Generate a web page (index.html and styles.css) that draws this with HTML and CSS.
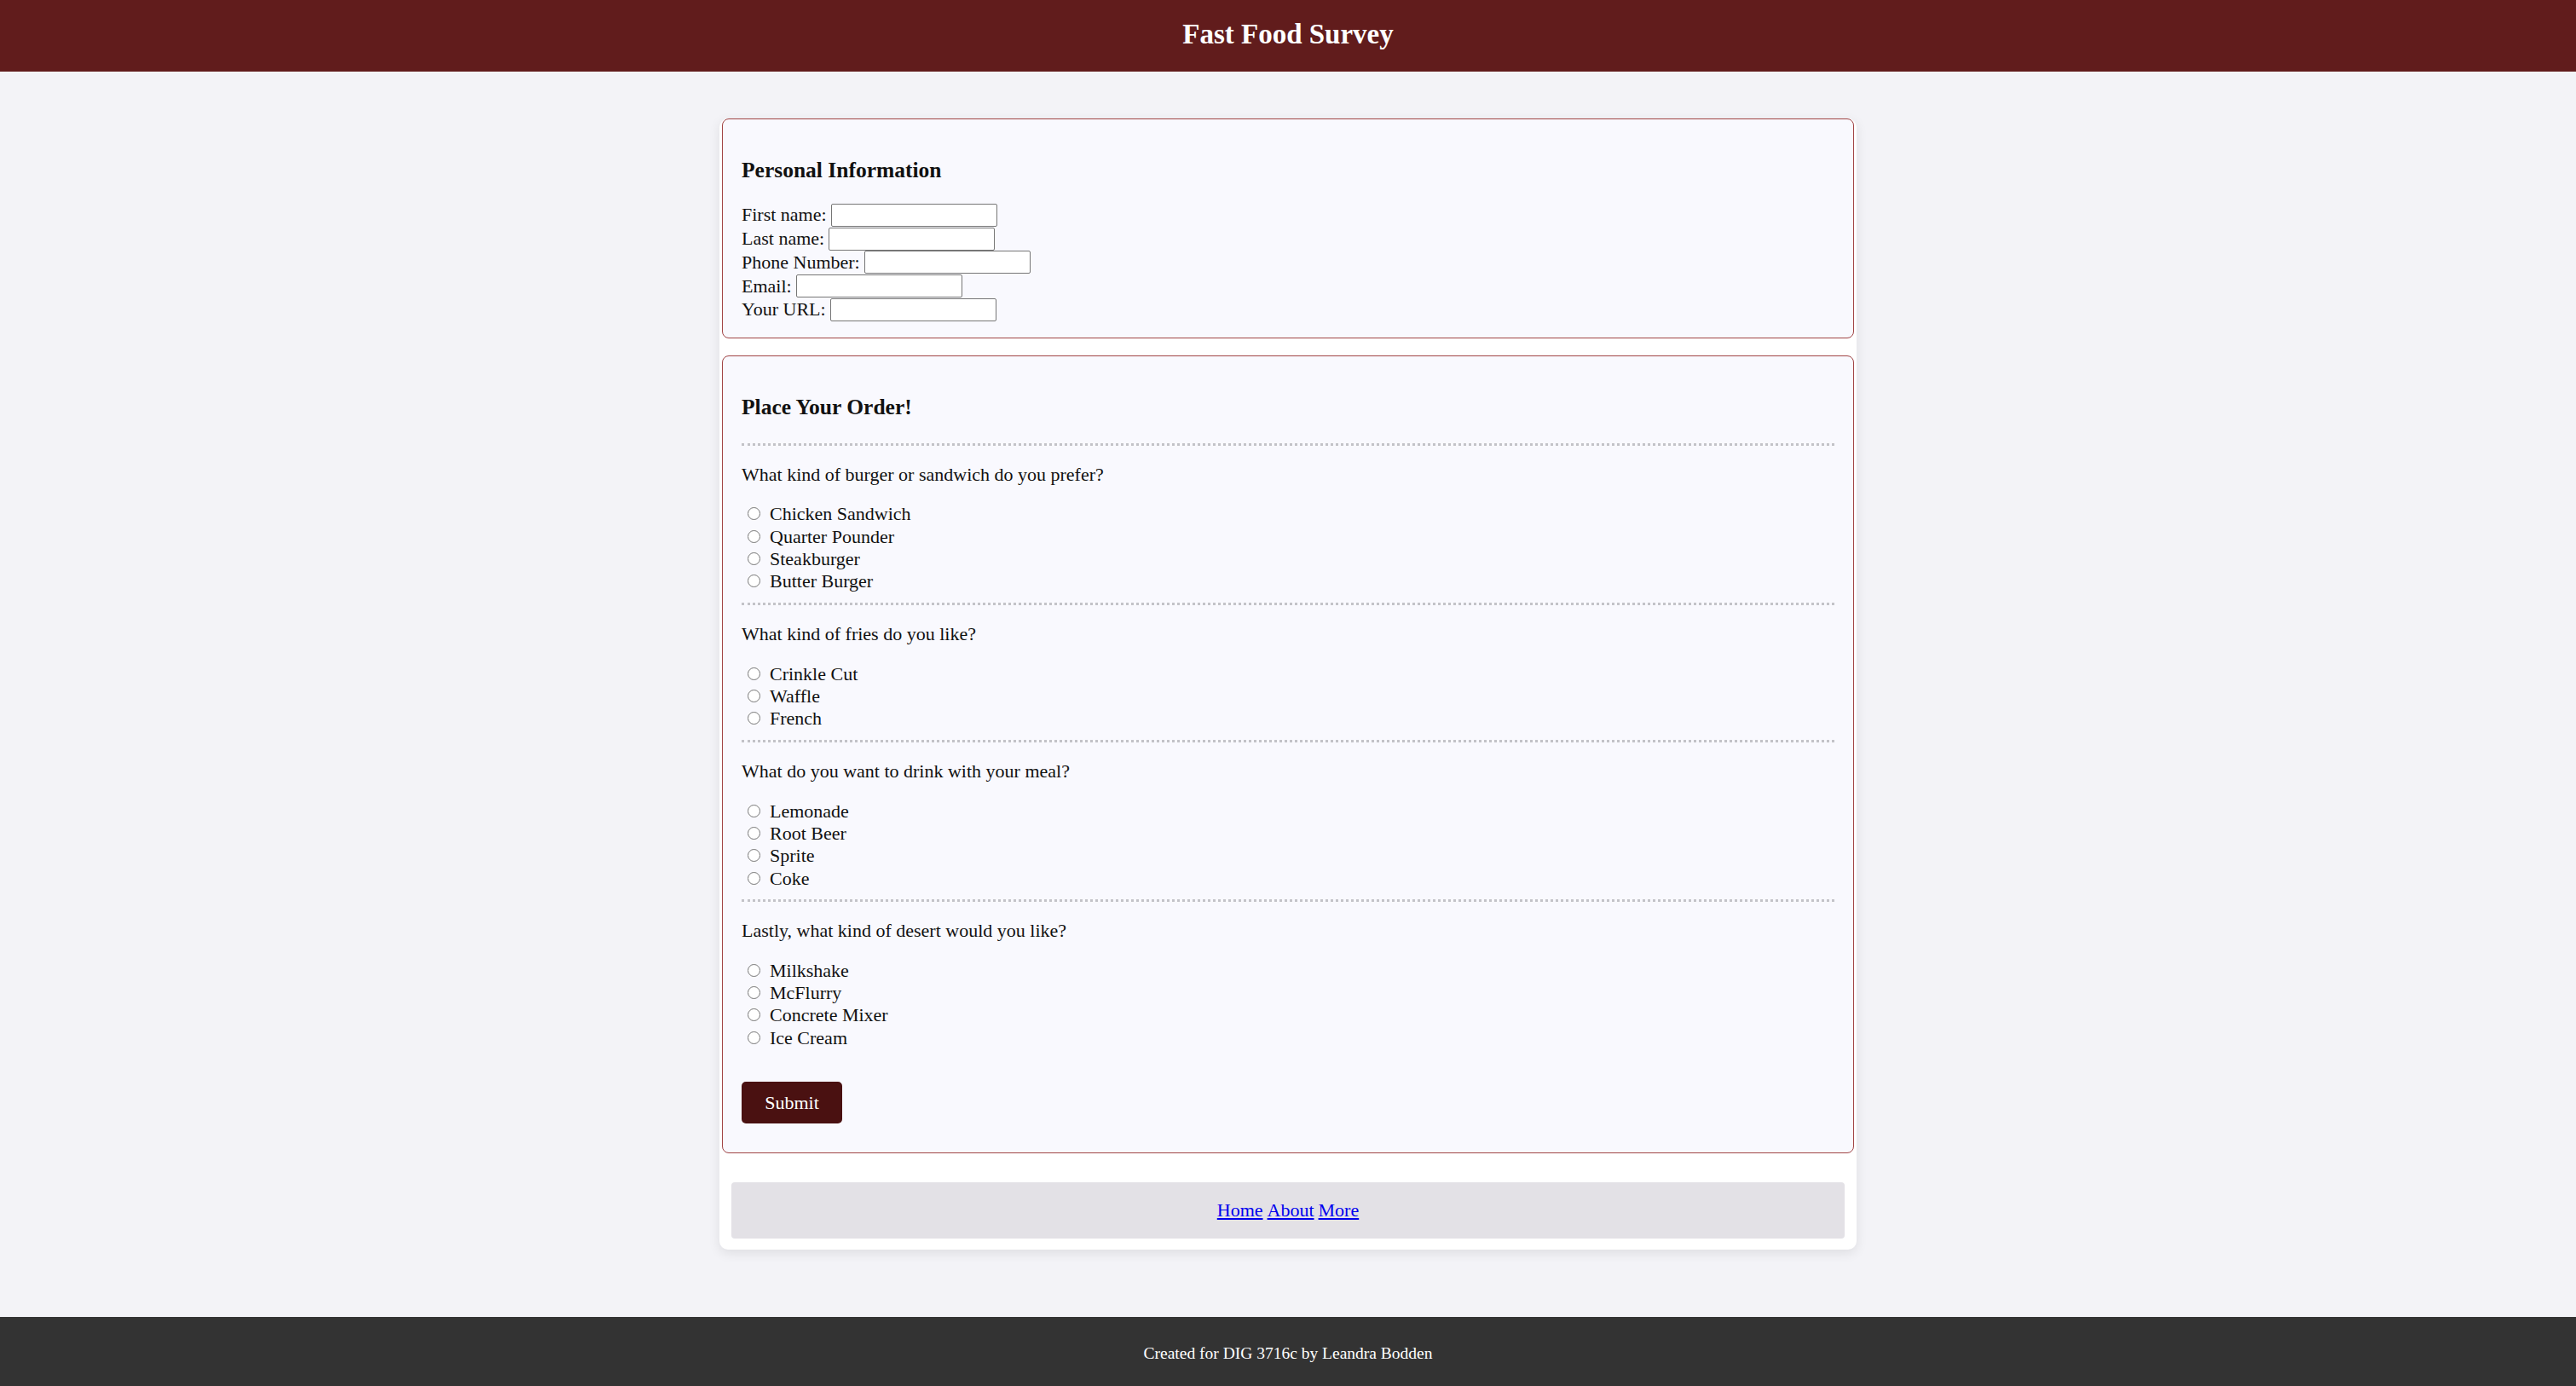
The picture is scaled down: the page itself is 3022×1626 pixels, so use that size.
FILE: index.html
```html
<!DOCTYPE html>
<html lang="en">
<head>
<meta charset="utf-8">
<title>Fast Food Survey</title>
<link rel="stylesheet" href="styles.css">
</head>
<body>
<header class="site-header">
  <h1 class="site-title">Fast Food Survey</h1>
</header>
<main class="card">
  <form class="survey">
    <fieldset class="panel panel-info">
      <h3 class="panel-title">Personal Information</h3>
      <div class="fields">
        <div class="field"><label>First name:</label><input class="text-input" type="text"></div>
        <div class="field"><label>Last name:</label><input class="text-input" type="text"></div>
        <div class="field"><label>Phone Number:</label><input class="text-input" type="tel"></div>
        <div class="field"><label>Email:</label><input class="text-input" type="email"></div>
        <div class="field"><label>Your URL:</label><input class="text-input" type="url"></div>
      </div>
    </fieldset>
    <fieldset class="panel panel-order">
      <h3 class="panel-title">Place Your Order!</h3>
      <hr class="divider">
      <p class="question">What kind of burger or sandwich do you prefer?</p>
      <div class="options">
        <label class="option"><input class="radio" type="radio" name="burger">Chicken Sandwich</label>
        <label class="option"><input class="radio" type="radio" name="burger">Quarter Pounder</label>
        <label class="option"><input class="radio" type="radio" name="burger">Steakburger</label>
        <label class="option"><input class="radio" type="radio" name="burger">Butter Burger</label>
      </div>
      <hr class="divider">
      <p class="question">What kind of fries do you like?</p>
      <div class="options">
        <label class="option"><input class="radio" type="radio" name="fries">Crinkle Cut</label>
        <label class="option"><input class="radio" type="radio" name="fries">Waffle</label>
        <label class="option"><input class="radio" type="radio" name="fries">French</label>
      </div>
      <hr class="divider">
      <p class="question">What do you want to drink with your meal?</p>
      <div class="options">
        <label class="option"><input class="radio" type="radio" name="drink">Lemonade</label>
        <label class="option"><input class="radio" type="radio" name="drink">Root Beer</label>
        <label class="option"><input class="radio" type="radio" name="drink">Sprite</label>
        <label class="option"><input class="radio" type="radio" name="drink">Coke</label>
      </div>
      <hr class="divider">
      <p class="question">Lastly, what kind of desert would you like?</p>
      <div class="options">
        <label class="option"><input class="radio" type="radio" name="desert">Milkshake</label>
        <label class="option"><input class="radio" type="radio" name="desert">McFlurry</label>
        <label class="option"><input class="radio" type="radio" name="desert">Concrete Mixer</label>
        <label class="option"><input class="radio" type="radio" name="desert">Ice Cream</label>
      </div>
      <button class="submit" type="submit">Submit</button>
    </fieldset>
  </form>
  <nav class="nav">
    <a href="#">Home</a> <a href="#">About</a> <a href="#">More</a>
  </nav>
</main>
<footer class="site-footer">Created for DIG 3716c by Leandra Bodden</footer>
</body>
</html>
```
FILE: styles.css
```css
html, body {
  margin: 0;
  padding: 0;
}
body {
  background: #f3f3f7;
  font-family: "Liberation Serif", "Times New Roman", serif;
  font-size: 22px;
  color: #111;
}
.site-header {
  height: 84px;
  box-sizing: border-box;
  background: #611c1c;
  padding-top: 22px;
}
.site-title {
  margin: 0;
  color: #fff;
  text-align: center;
  font-size: 33px;
  line-height: 36px;
  font-weight: bold;
}
.card {
  width: 1334px;
  margin: 55px auto 79px;
  background: #fff;
  border-radius: 10px;
  box-shadow: 0 4px 14px rgba(0, 0, 0, 0.09);
  padding: 0 0 13px;
}
.survey {
  display: flex;
  flex-direction: column;
  gap: 20px;
}
.panel {
  margin: 0 3px;
  border: 1px solid #a14545;
  border-radius: 8px;
  background: #f9f9fe;
  min-width: 0;
}
.panel-info {
  padding: 46px 22px 19px;
}
.panel-order {
  padding: 46px 22px 34px;
}
.panel-title {
  margin: 0;
  font-size: 25.5px;
  line-height: 27px;
  font-weight: bold;
}
.fields {
  margin-top: 25.6px;
  display: flex;
  flex-direction: column;
}
.field {
  height: 27.75px;
  display: flex;
  align-items: center;
  gap: 5px;
  line-height: 24px;
}
.text-input {
  box-sizing: border-box;
  width: 195px;
  height: 27px;
  margin: 0;
  border: 1px solid #767676;
  border-radius: 2px;
  background: #fff;
  padding: 0 3px;
  font: inherit;
}
.divider {
  border: 0;
  border-top: 3px dotted #c3c3c8;
  margin: 28.6px 0 0;
}
.options + .divider {
  margin-top: 11.5px;
}
.question {
  margin: 22.1px 0 0;
  line-height: 23px;
}
.options {
  margin-top: 22.3px;
  display: flex;
  flex-direction: column;
}
.option {
  height: 26.33px;
  display: flex;
  align-items: center;
  line-height: 24px;
}
.radio {
  appearance: none;
  -webkit-appearance: none;
  box-sizing: border-box;
  width: 15px;
  height: 15px;
  margin: 0 11px 1px 7px;
  border: 1px solid #767676;
  border-radius: 50%;
  background: #fff;
}
.submit {
  align-self: flex-start;
  margin-top: 38.3px;
  width: 118px;
  height: 49px;
  border: 0;
  border-radius: 5px;
  background: #4a1111;
  color: #fff;
  font: inherit;
  font-size: 22px;
}
.nav {
  margin: 34px 14px 0;
  height: 66px;
  background: #e3e1e6;
  border-radius: 4px;
  display: flex;
  align-items: center;
  justify-content: center;
  gap: 5px;
  line-height: 24px;
}
.nav a {
  color: #0000ee;
  text-decoration: underline;
}
.site-footer {
  height: 81px;
  background: #333;
  color: #fff;
  display: flex;
  align-items: center;
  justify-content: center;
  font-size: 19.5px;
  padding-top: 4px;
  box-sizing: border-box;
}
```
